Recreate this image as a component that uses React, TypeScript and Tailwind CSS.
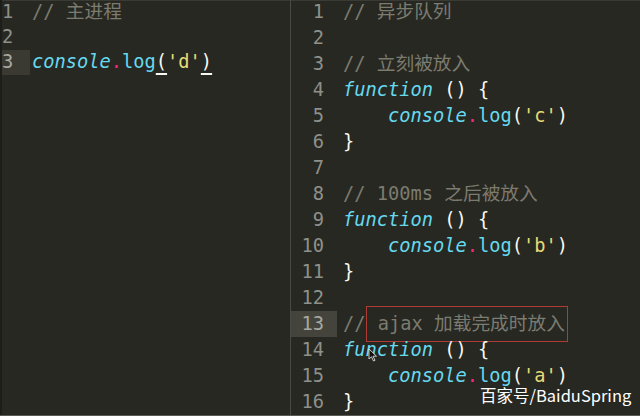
import React from 'react';

type Tok = { t: string; c: string };

const mono = "font-['DejaVu_Sans_Mono','Noto_Sans_CJK_SC',monospace]";

const C = {
  cm: 'text-[#7c7b70]',
  kw: 'text-[#66d9ef] italic',
  fn: 'text-[#66d9ef]',
  dot: 'text-[#f92672]',
  p: 'text-[#f8f8f2]',
  s: 'text-[#e6db74]',
};

const comment = (t: string): Tok[] => [{ t, c: C.cm }];
const fnLine: Tok[] = [
  { t: 'function', c: C.kw },
  { t: ' () {', c: C.p },
];
const logLine = (ch: string): Tok[] => [
  { t: '    ', c: C.p },
  { t: 'console', c: C.kw },
  { t: '.', c: C.dot },
  { t: 'log', c: C.fn },
  { t: '(', c: C.p },
  { t: `'${ch}'`, c: C.s },
  { t: ')', c: C.p },
];
const close: Tok[] = [{ t: '}', c: C.p }];

const rightLines: Tok[][] = [
  comment('// 异步队列'),
  [],
  comment('// 立刻被放入'),
  fnLine,
  logLine('c'),
  close,
  [],
  comment('// 100ms 之后被放入'),
  fnLine,
  logLine('b'),
  close,
  [],
  [],
  fnLine,
  logLine('a'),
  close,
];

function Code({ toks }: { toks: Tok[] }) {
  return (
    <span className="whitespace-pre">
      {toks.map((k, i) => (
        <span key={i} className={k.c}>
          {k.t}
        </span>
      ))}
    </span>
  );
}

function LeftPane() {
  return (
    <div className={`w-[290px] shrink-0 border-l-2 border-[#1d1e19] pt-[1px] text-[18.7px] ${mono}`}>
      <div className="flex h-[25px] items-center">
        <div className="w-[28px] text-[#8f908a]">1</div>
        <div className={`ml-[2px] ${C.cm}`}>// 主进程</div>
      </div>
      <div className="flex h-[25px] items-center">
        <div className="w-[28px] text-[#8f908a]">2</div>
      </div>
      <div className="flex h-[25px] items-center">
        <div className="flex h-full w-[28px] items-center bg-[#3a3a33] text-[#a8a8a0]">3</div>
        <div className="ml-[2px] whitespace-pre">
          <span className={C.kw}>console</span>
          <span className={C.dot}>.</span>
          <span className={C.fn}>log</span>
          <span className={`${C.p} underline decoration-2 underline-offset-[5px]`}>(</span>
          <span className={C.s}>'d'</span>
          <span className={`${C.p} underline decoration-2 underline-offset-[5px]`}>)</span>
        </div>
      </div>
    </div>
  );
}

function RightPane() {
  return (
    <div className={`relative flex-1 border-l border-[#4a4a44] text-[18.7px] ${mono}`}>
      {rightLines.map((toks, i) => {
        const n = i + 1;
        const active = n === 13;
        return (
          <div key={n} className="flex h-[26px] items-center">
            <div
              className={`flex h-full w-[46px] items-center justify-end pr-[13px] ${
                active ? 'bg-[#45443c] text-[#a8a8a0]' : 'text-[#8f908a]'
              }`}
            >
              {n}
            </div>
            <div className="ml-[6px]">
              {active ? (
                <span className="whitespace-pre">
                  <span className={C.cm}>//</span>
                  <span className={`${C.cm} -my-[4px] inline-block border border-[#b03a35] py-[3px] pr-[2px]`}>
                    {' ajax 加载完成时放入'}
                  </span>
                </span>
              ) : (
                <Code toks={toks} />
              )}
            </div>
          </div>
        );
      })}

      {/* mouse pointer */}
      <svg className="absolute left-[77px] top-[349px]" width="10" height="14" viewBox="0 0 10 14">
        <path d="M1 1 L1 11 L3.5 8.8 L5.5 13 L7 12.3 L5 8.2 L8.5 8.2 Z" fill="#111" stroke="#ddd" strokeWidth="0.9" />
      </svg>

      {/* watermark */}
      <div className="absolute left-[189px] top-[388px] whitespace-nowrap text-[16.5px] leading-[17px] text-white font-['Noto_Sans_CJK_SC',sans-serif]">
        百家号/BaiduSpring
      </div>
    </div>
  );
}

export default function App() {
  return (
    <div className="flex h-[416px] w-[640px] flex-col overflow-hidden bg-[#272822]">
      <div className="h-[2px] bg-[#3a3a35]" />
      <div className="-mt-[2px] flex flex-1">
        <LeftPane />
        <RightPane />
      </div>
      <div className="h-[3px] bg-[#5a5a54]" />
    </div>
  );
}
